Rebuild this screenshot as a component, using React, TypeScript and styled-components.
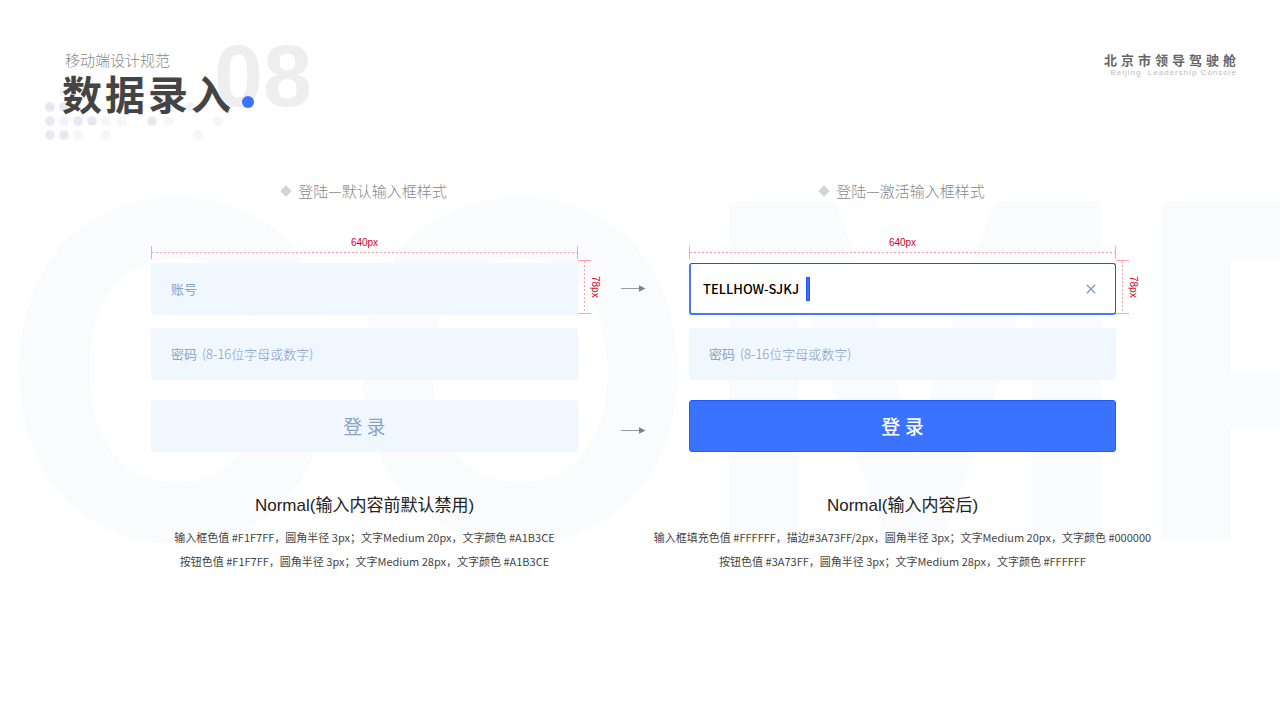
import React from "react";
import styled, { createGlobalStyle } from "styled-components";

const cjk = `"Noto Sans CJK SC", "Liberation Sans", sans-serif`;
const latin = `"Liberation Sans", "Noto Sans CJK SC", sans-serif`;

const GlobalStyle = createGlobalStyle`
  * { box-sizing: border-box; }
  body { margin: 0; background: #fff; font-family: ${cjk}; color: #333; }
  h1, h2, h3, p { margin: 0; font-weight: 400; }
  button, input { font: inherit; color: inherit; margin: 0; }
`;

const Page = styled.div`
  position: relative;
  isolation: isolate;
  min-height: 100vh;
  overflow: hidden;
`;

const Watermark = styled.div`
  position: absolute;
  z-index: -1;
  top: 170px;
  left: -2px;
  font: 700 464px/400px Inter, sans-serif;
  color: #fafbfd;
  white-space: nowrap;
  user-select: none;
`;

const Header = styled.header`
  display: flex;
  justify-content: space-between;
  align-items: flex-start;
  height: 140px;
  padding: 50px 43px 0 62px;
`;

const TitleBlock = styled.div`
  position: relative;
  isolation: isolate;
`;

const Category = styled.p`
  padding-left: 3px;
  font-size: 15px;
  line-height: 20px;
  font-weight: 300;
  color: #888;
`;

const Title = styled.h1`
  display: flex;
  align-items: center;
  font-size: 40px;
  line-height: 46px;
  font-weight: 700;
  letter-spacing: 3px;
  color: #444;
`;

const TitleDot = styled.span`
  width: 12px;
  height: 12px;
  margin: 18px 0 0 8px;
  border-radius: 50%;
  background: #3a73ff;
`;

const SectionNumber = styled.span`
  position: absolute;
  z-index: -1;
  top: -20px;
  left: 152px;
  font: 700 88px/92px ${latin};
  color: #eee;
`;

const DotPattern = styled.svg`
  position: absolute;
  z-index: -2;
  top: 36px;
  left: -18px;
`;

const Brand = styled.div`
  text-align: right;
`;

const BrandName = styled.p`
  font-size: 13px;
  line-height: 20px;
  font-weight: 700;
  letter-spacing: 4px;
  margin-right: -3px;
  color: #666;
`;

const BrandSub = styled.p`
  font: 400 8px/6px ${latin};
  letter-spacing: 1px;
  white-space: pre;
  color: #bbb;
`;

const Main = styled.main`
  display: grid;
  grid-template-columns: minmax(0, 427px) 111px minmax(0, 427px);
  justify-content: center;
  padding: 40px 13px 60px 0;
`;

const Panel = styled.section`
  display: flex;
  flex-direction: column;
`;

const PanelTitle = styled.h2`
  display: flex;
  align-items: center;
  justify-content: center;
  gap: 8px;
  font-size: 15px;
  line-height: 22px;
  font-weight: 300;
  color: #888;
`;

const Diamond = styled.span`
  width: 8px;
  height: 8px;
  transform: rotate(45deg);
  background: #d4d4d4;
`;

const WidthRuler = styled.div`
  display: flex;
  flex-direction: column;
  align-items: center;
  margin: 36px 0 4px;
  font: 400 10px/10px ${latin};
  color: #d0021b;
`;

const WidthLine = styled.span`
  width: 100%;
  height: 13px;
  margin-top: -2px;
  border: solid #ffa3a8;
  border-width: 0 1px;
  background: repeating-linear-gradient(90deg, #ffa3a8 0 2px, transparent 2px 4px) 0 6px / 100% 1px no-repeat;
`;

const HeightRuler = styled.div`
  position: absolute;
  top: -3px;
  left: 100%;
  display: flex;
  align-items: center;
  height: 54px;
  font: 400 10px/8px ${latin};
  color: #d0021b;
`;

const HeightLine = styled.span`
  width: 13px;
  height: 54px;
  border: solid #ffa3a8;
  border-width: 1px 0;
  background: repeating-linear-gradient(180deg, #ffa3a8 0 2px, transparent 2px 4px) 6px 0 / 1px 100% no-repeat;
`;

const HeightValue = styled.span`
  writing-mode: vertical-rl;
`;

const Form = styled.form`
  display: flex;
  flex-direction: column;
`;

const FieldRow = styled.div`
  position: relative;
  margin-bottom: 13px;
`;

const Field = styled.div<{ $active?: boolean }>`
  display: flex;
  align-items: center;
  height: 52px;
  padding: 0 ${(p) => (p.$active ? "19px 0 12px" : "20px")};
  border: solid;
  border-width: ${(p) => (p.$active ? "1px 1px 2px 2px" : "0")};
  border-color: #1a50f5 #1a50f5 #447aff #447aff;
  border-radius: 3px;
  background: ${(p) => (p.$active ? "#fff" : "#f1f7ff")};
  font-size: 13px;
  line-height: 20px;
  color: #94a9c9;
`;

const FieldLabel = styled.label`
  flex: none;
  font-weight: 400;
  color: #8ba2c6;
`;

const Input = styled.input`
  flex: 1;
  min-width: 0;
  padding: 0 0 0 5px;
  border: 0;
  outline: 0;
  background: none;
  font-weight: 300;
  &::placeholder { color: #8299c0; opacity: 1; }
`;

const ActiveInput = styled.input`
  width: 102px;
  padding: 0;
  border: 0;
  outline: 0;
  background: none;
  font-weight: 500;
  color: #000;
`;

const Caret = styled.span`
  width: 4px;
  height: 24px;
  margin-left: 1px;
  background: #3a73ff;
  border: 1px solid #1f58f0;
`;

const ClearButton = styled.button`
  display: flex;
  margin-left: auto;
  padding: 0;
  border: 0;
  background: none;
`;

const LoginButton = styled.button<{ $primary?: boolean }>`
  height: 52px;
  margin-top: 7px;
  padding: 0 0 2px;
  border: ${(p) => (p.$primary ? "1px solid #1f5cff" : "0")};
  border-radius: 3px;
  background: ${(p) => (p.$primary ? "#3a73ff" : "#f1f7ff")};
  font-size: 19px;
  font-weight: ${(p) => (p.$primary ? 500 : 400)};
  color: ${(p) => (p.$primary ? "#fff" : "#8ba2c6")};
`;

const Notes = styled.div`
  margin: 41px -40px 0;
  text-align: center;
`;

const NotesTitle = styled.h3`
  margin-bottom: 6px;
  font: 400 17px/26px ${latin};
  color: #222;
`;

const Note = styled.p`
  font-size: 11px;
  line-height: 24px;
  white-space: nowrap;
  color: #444;
`;

const Arrows = styled.div`
  display: flex;
  flex-direction: column;
  align-items: center;
  gap: 134px;
  padding: 104px 2px 0 0;
`;

const dots: [number, number, string][] = [
  [20, 6, "#f2f3fa"],
  [6, 21, "#e8e8f0"], [20, 21, "#e8e8f0"], [146, 21, "#f2f3fa"],
  [6, 35, "#e8e8f0"], [20, 35, "#f2f3fa"], [34, 35, "#e8e8f0"], [48, 35, "#e8e8f0"],
  [62, 35, "#f6f6f5"], [78, 35, "#f6f6f5"], [108, 35, "#e8e8f0"], [125, 35, "#f6f6f5"], [174, 35, "#f6f6f5"],
  [6, 49, "#e8e8f0"], [20, 49, "#e8e8f0"], [34, 49, "#f6f6f5"], [62, 49, "#f6f6f5"], [154, 49, "#f6f6f5"],
];

function Arrow() {
  return (
    <svg width="26" height="8" viewBox="0 0 26 8" aria-hidden="true">
      <path d="M1 4.5H20" stroke="#999" strokeWidth="1" />
      <path d="M19 1.2L25.5 4.5L19 7.8Z" fill="#808080" />
    </svg>
  );
}

function Ruler() {
  return (
    <WidthRuler>
      640px
      <WidthLine />
    </WidthRuler>
  );
}

function SideRuler() {
  return (
    <HeightRuler>
      <HeightLine />
      <HeightValue>78px</HeightValue>
    </HeightRuler>
  );
}

function PasswordField({ id }: { id: string }) {
  return (
    <FieldRow>
      <Field>
        <FieldLabel htmlFor={id}>密码</FieldLabel>
        <Input id={id} type="password" placeholder="(8-16位字母或数字)" />
      </Field>
    </FieldRow>
  );
}

export default function App() {
  return (
    <Page>
      <GlobalStyle />
      <Watermark aria-hidden="true">COMP</Watermark>
      <Header>
        <TitleBlock>
          <Category>移动端设计规范</Category>
          <Title>
            数据录入
            <TitleDot />
          </Title>
          <SectionNumber>08</SectionNumber>
          <DotPattern width="190" height="56" viewBox="0 0 190 56" aria-hidden="true">
            {dots.map(([x, y, fill]) => (
              <circle key={`${x}-${y}`} cx={x} cy={y} r="4.8" fill={fill} />
            ))}
          </DotPattern>
        </TitleBlock>
        <Brand>
          <BrandName>北京市领导驾驶舱</BrandName>
          <BrandSub>{"Beijing  Leadership Console"}</BrandSub>
        </Brand>
      </Header>
      <Main>
        <Panel>
          <PanelTitle>
            <Diamond />
            登陆—默认输入框样式
          </PanelTitle>
          <Ruler />
          <Form onSubmit={(e) => e.preventDefault()}>
            <FieldRow>
              <Field>
                <FieldLabel htmlFor="account">账号</FieldLabel>
                <Input id="account" type="text" />
              </Field>
              <SideRuler />
            </FieldRow>
            <PasswordField id="password" />
            <LoginButton type="submit">登 录</LoginButton>
          </Form>
          <Notes>
            <NotesTitle>Normal(输入内容前默认禁用)</NotesTitle>
            <Note>输入框色值 #F1F7FF，圆角半径 3px；文字Medium 20px，文字颜色 #A1B3CE</Note>
            <Note>按钮色值 #F1F7FF，圆角半径 3px；文字Medium 28px，文字颜色 #A1B3CE</Note>
          </Notes>
        </Panel>
        <Arrows>
          <Arrow />
          <Arrow />
        </Arrows>
        <Panel>
          <PanelTitle>
            <Diamond />
            登陆—激活输入框样式
          </PanelTitle>
          <Ruler />
          <Form onSubmit={(e) => e.preventDefault()}>
            <FieldRow>
              <Field $active>
                <ActiveInput type="text" aria-label="账号" defaultValue="TELLHOW-SJKJ" />
                <Caret />
                <ClearButton type="button" aria-label="清除">
                  <svg width="10" height="10" viewBox="0 0 10 10" fill="none" stroke="#8da3c5" strokeWidth="1.6">
                    <path d="M0.8 0.8L9.2 9.2M9.2 0.8L0.8 9.2" />
                  </svg>
                </ClearButton>
              </Field>
              <SideRuler />
            </FieldRow>
            <PasswordField id="password-active" />
            <LoginButton type="submit" $primary>登 录</LoginButton>
          </Form>
          <Notes>
            <NotesTitle>Normal(输入内容后)</NotesTitle>
            <Note>输入框填充色值 #FFFFFF，描边#3A73FF/2px，圆角半径 3px；文字Medium 20px，文字颜色 #000000</Note>
            <Note>按钮色值 #3A73FF，圆角半径 3px；文字Medium 28px，文字颜色 #FFFFFF</Note>
          </Notes>
        </Panel>
      </Main>
    </Page>
  );
}
